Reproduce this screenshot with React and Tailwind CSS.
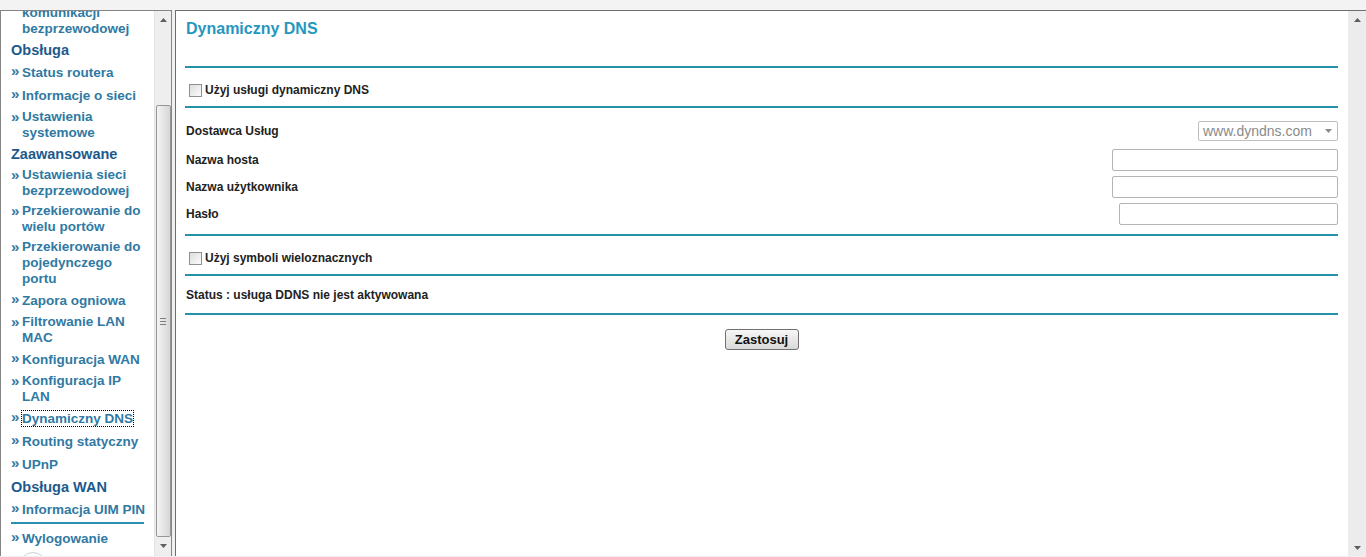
import React from 'react';

const nav = [
  { type: 'item', lines: ['Ustawienia', 'komunikacji', 'bezprzewodowej'] },
  { type: 'head', text: 'Obsługa' },
  { type: 'item', lines: ['Status routera'] },
  { type: 'item', lines: ['Informacje o sieci'] },
  { type: 'item', lines: ['Ustawienia', 'systemowe'] },
  { type: 'head', text: 'Zaawansowane' },
  { type: 'item', lines: ['Ustawienia sieci', 'bezprzewodowej'] },
  { type: 'item', lines: ['Przekierowanie do', 'wielu portów'] },
  { type: 'item', lines: ['Przekierowanie do', 'pojedynczego', 'portu'] },
  { type: 'item', lines: ['Zapora ogniowa'] },
  { type: 'item', lines: ['Filtrowanie LAN', 'MAC'] },
  { type: 'item', lines: ['Konfiguracja WAN'] },
  { type: 'item', lines: ['Konfiguracja IP', 'LAN'] },
  { type: 'item', lines: ['Dynamiczny DNS'], active: true },
  { type: 'item', lines: ['Routing statyczny'] },
  { type: 'item', lines: ['UPnP'] },
  { type: 'head', text: 'Obsługa WAN' },
  { type: 'item', lines: ['Informacja UIM PIN'] },
];

const Arrow = ({ down }) => (
  <svg width="7" height="4" viewBox="0 0 7 4" className={down ? 'rotate-180' : ''}>
    <path d="M3.5 0L7 4H0z" fill="#5f5f5f" />
  </svg>
);

const NavItem = ({ item }) => {
  const multi = item.lines.length > 1;
  return (
    <div className={multi ? 'flex pt-[2px] pb-[2px]' : 'flex pt-[4px] pb-[3px]'}>
      <span className={multi ? 'w-[11px] shrink-0 leading-4 text-[15px]' : 'w-[11px] shrink-0 leading-4 text-[15px] relative top-[-2px]'}>»</span>
      <div>
        {item.lines.map((l) => (
          <div key={l} className="leading-4">
            {item.active ? <span className="outline outline-1 outline-dotted outline-black">{l}</span> : l}
          </div>
        ))}
      </div>
    </div>
  );
};

const Checkbox = () => (
  <span className="w-[13px] h-[13px] border border-[#8f8f8f] bg-linear-to-br from-[#dedede] to-[#fbfbfb] shrink-0" />
);

const Rule = () => <div className="h-[2px] bg-[#2592a8]" />;

const FormRow = ({ label, className, children }) => (
  <div className={`flex items-center justify-between ${className}`}>
    <span>{label}</span>
    {children}
  </div>
);

export default function App() {
  return (
    <div className="w-[1366px] h-[557px] overflow-hidden bg-[#f0f0f0] flex flex-col font-['Liberation_Sans',Arial,sans-serif]">
      <div className="h-[10px] shrink-0 bg-[#f3f3f3]" />
      <div className="flex h-[546px] gap-[3px]">
        {/* left menu frame */}
        <div className="w-[172px] flex border-x border-t border-[#858585] bg-white">
          <div className="flex-1 overflow-hidden pl-[10px] text-[13.5px] font-bold text-[#3079a3]">
            <div className="mt-[-24px]">
              {nav.map((it, i) =>
                it.type === 'head' ? (
                  <div key={i} className="pt-[3px] pb-[3px] leading-4 text-[14.5px] text-[#1d5a8c]">{it.text}</div>
                ) : (
                  <NavItem key={i} item={it} />
                )
              )}
              <div className="mt-[1px] h-[2px] w-[133px] bg-[#2d8db3]" />
              <div className="flex pt-[7px] pb-[3px]">
                <span className="w-[11px] shrink-0 leading-4 text-[15px] relative top-[-2px]">»</span>
                <div className="leading-4">Wylogowanie</div>
              </div>
              <div className="ml-[8px] mt-[2px] w-[28px] h-[28px] rounded-full border border-[#c9d2da]" />
            </div>
          </div>
          <div className="w-[17px] bg-[#eeeeee] flex flex-col items-center border-l border-[#e4e4e4]">
            <div className="h-[17px] flex items-center justify-center"><Arrow /></div>
            <div className="mt-[77px] w-[15px] h-[432px] rounded-[2px] border border-[#979797] bg-linear-to-r from-[#f4f4f4] to-[#d6d6d6] flex flex-col items-center justify-center gap-[2px]">
              <div className="w-[6px] h-px bg-[#7d7d7d]" />
              <div className="w-[6px] h-px bg-[#7d7d7d]" />
              <div className="w-[6px] h-px bg-[#7d7d7d]" />
            </div>
            <div className="h-[17px] flex items-center justify-center"><Arrow down /></div>
          </div>
        </div>

        {/* right content frame */}
        <div className="flex-1 flex border-l border-t border-[#6e6e6e] bg-white">
          <div className="flex-1 pl-[9px] pr-[10px] text-[12px] font-bold text-[#222]">
            <div className="h-[55px] pt-[8px] pl-[1px] text-[16px] leading-5 text-[#2597bf]">Dynamiczny DNS</div>
            <Rule />
            <div className="h-[38px] pt-[6px] flex items-center gap-[3px] pl-[4px]">
              <Checkbox />
              <span>Użyj usługi dynamiczny DNS</span>
            </div>
            <Rule />
            <div className="pl-[1px]">
              <FormRow label="Dostawca Usług" className="mt-[13px] h-[20px]">
                <div className="w-[140px] h-[20px] border border-[#bdbdbd] rounded-[2px] flex items-center justify-between pl-[4px] pr-[5px] text-[14px] font-normal text-[#8a8a8a]">
                  <span>www.dyndns.com</span>
                  <svg width="7" height="4" viewBox="0 0 7 4"><path d="M0 0h7L3.5 4z" fill="#8a8a8a" /></svg>
                </div>
              </FormRow>
              <FormRow label="Nazwa hosta" className="mt-[8px] h-[22px]">
                <div className="w-[226px] h-[22px] border border-[#b4b4b4] rounded-[2px]" />
              </FormRow>
              <FormRow label="Nazwa użytkownika" className="mt-[5px] h-[22px]">
                <div className="w-[226px] h-[22px] border border-[#b4b4b4] rounded-[2px]" />
              </FormRow>
              <FormRow label="Hasło" className="mt-[5px] mb-[9px] h-[22px]">
                <div className="w-[219px] h-[22px] border border-[#b4b4b4] rounded-[2px]" />
              </FormRow>
            </div>
            <Rule />
            <div className="h-[38px] pt-[6px] flex items-center gap-[3px] pl-[4px]">
              <Checkbox />
              <span>Użyj symboli wieloznacznych</span>
            </div>
            <Rule />
            <div className="h-[37px] flex items-center pl-[1px]">Status : usługa DDNS nie jest aktywowana</div>
            <Rule />
            <div className="flex justify-center mt-[14px]">
              <button className="w-[74px] h-[21px] border border-[#707070] rounded-[3px] bg-linear-to-b from-[#f7f7f7] to-[#d9d9d9] text-[13px] font-bold text-[#111] leading-none">
                Zastosuj
              </button>
            </div>
          </div>
          <div className="w-[18px] bg-[#ececec] flex flex-col items-center justify-between">
            <div className="h-[17px] flex items-center justify-center"><Arrow /></div>
            <div className="h-[17px] flex items-center justify-center"><Arrow down /></div>
          </div>
        </div>
      </div>
      <div className="h-[1px] shrink-0 bg-[#f0f0f0]" />
    </div>
  );
}
